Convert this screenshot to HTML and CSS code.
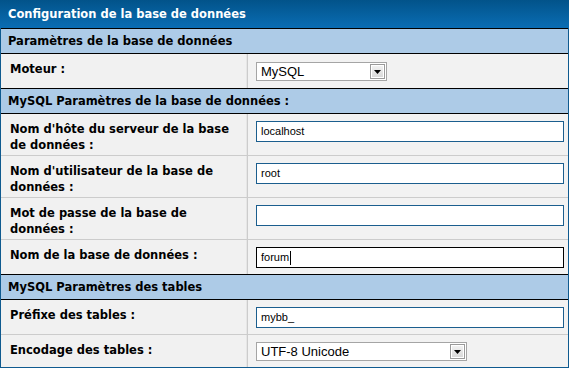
FILE: index.html
```html
<!DOCTYPE html>
<html lang="fr">
<head>
<meta charset="utf-8">
<title>Configuration de la base de données</title>
<link rel="stylesheet" href="styles.css">
</head>
<body>
<div class="panel">
  <div class="panel-head">Configuration de la base de données</div>

  <div class="section">Paramètres de la base de données</div>
  <div class="row">
    <div class="label">Moteur :</div>
    <div class="control control-first">
      <div class="select sel-engine">
        <span class="sel-text">MySQL</span>
        <span class="sel-btn"><svg width="7" height="4" viewBox="0 0 7 4"><path d="M0 0h7L3.5 4z" fill="#000"/></svg></span>
      </div>
    </div>
  </div>

  <div class="section">MySQL Paramètres de la base de données :</div>
  <div class="row">
    <div class="label">Nom d'hôte du serveur de la base de données :</div>
    <div class="control"><div class="field">localhost</div></div>
  </div>
  <div class="row">
    <div class="label">Nom d'utilisateur de la base de données :</div>
    <div class="control"><div class="field">root</div></div>
  </div>
  <div class="row">
    <div class="label">Mot de passe de la base de données :</div>
    <div class="control"><div class="field"></div></div>
  </div>
  <div class="row">
    <div class="label">Nom de la base de données :</div>
    <div class="control"><div class="field focus">forum<span class="caret"></span></div></div>
  </div>

  <div class="section">MySQL Paramètres des tables</div>
  <div class="row">
    <div class="label">Préfixe des tables :</div>
    <div class="control"><div class="field">mybb_</div></div>
  </div>
  <div class="row">
    <div class="label">Encodage des tables :</div>
    <div class="control">
      <div class="select sel-enc">
        <span class="sel-text">UTF-8 Unicode</span>
        <span class="sel-btn"><svg width="7" height="4" viewBox="0 0 7 4"><path d="M0 0h7L3.5 4z" fill="#000"/></svg></span>
      </div>
    </div>
  </div>
</div>
</body>
</html>
```

FILE: styles.css
```css
html, body {
  margin: 0;
  padding: 0;
  background: #ffffff;
}

.panel {
  width: 569px;
  box-sizing: border-box;
  border: 1px solid #0f5a8f;
  border-top: 0;
  font-family: "DejaVu Sans", Verdana, sans-serif;
  font-size: 11.5px;
  font-weight: bold;
  color: #000;
  background: #f1f1f1;
}

.panel-head {
  height: 28px;
  line-height: 28px;
  color: #ffffff;
  background: linear-gradient(#02538a, #0a6db4);
  margin: 0 -1px;
  padding-left: 8px;
}

.section {
  height: 24px;
  line-height: 24px;
  padding-left: 7px;
  background: #adcbe7;
  border-top: 1px solid #000;
  border-bottom: 1px solid #000;
}

.row {
  display: grid;
  grid-template-columns: 247px 1fr;
  background: #f1f1f1;
}

.row + .row {
  border-top: 1px solid #cccccc;
}

.label {
  padding: 7px 10px 2px 9px;
  line-height: 16px;
  border-right: 1px solid #cccccc;
  box-shadow: inset -1px 0 0 #e6e6e6;
}

.control {
  padding: 7px 4px 6px 8px;
  background: #f2f2f2;
}

.control-first {
  padding-top: 8px;
  padding-bottom: 7px;
}

.field {
  box-sizing: border-box;
  width: 308px;
  height: 21px;
  border: 1px solid #1b5e8e;
  background: #ffffff;
  font-family: "Liberation Sans", Arial, sans-serif;
  font-weight: normal;
  font-size: 11px;
  line-height: 19px;
  padding-left: 4px;
  color: #000;
  display: flex;
  align-items: center;
}

.field.focus {
  border-color: #000;
}

.caret {
  display: inline-block;
  width: 1px;
  height: 14px;
  background: #000;
  margin-left: 1px;
}

.select {
  box-sizing: border-box;
  height: 19px;
  border: 1px solid #a5a5a5;
  background: #ffffff;
  display: flex;
  align-items: stretch;
  font-family: "Liberation Sans", Arial, sans-serif;
  font-weight: normal;
  font-size: 13px;
  color: #000;
}

.sel-engine { width: 131px; }
.sel-enc { width: 211px; }

.sel-text {
  flex: 1;
  padding-left: 4px;
  line-height: 17px;
}

.sel-btn {
  width: 15px;
  margin: 1px;
  box-sizing: border-box;
  border: 1px solid #9a9a9a;
  box-shadow: inset 0 0 0 1px #ffffff;
  background: linear-gradient(#f4f4f4, #d6d6d6);
  display: flex;
  align-items: center;
  justify-content: center;
}
```
